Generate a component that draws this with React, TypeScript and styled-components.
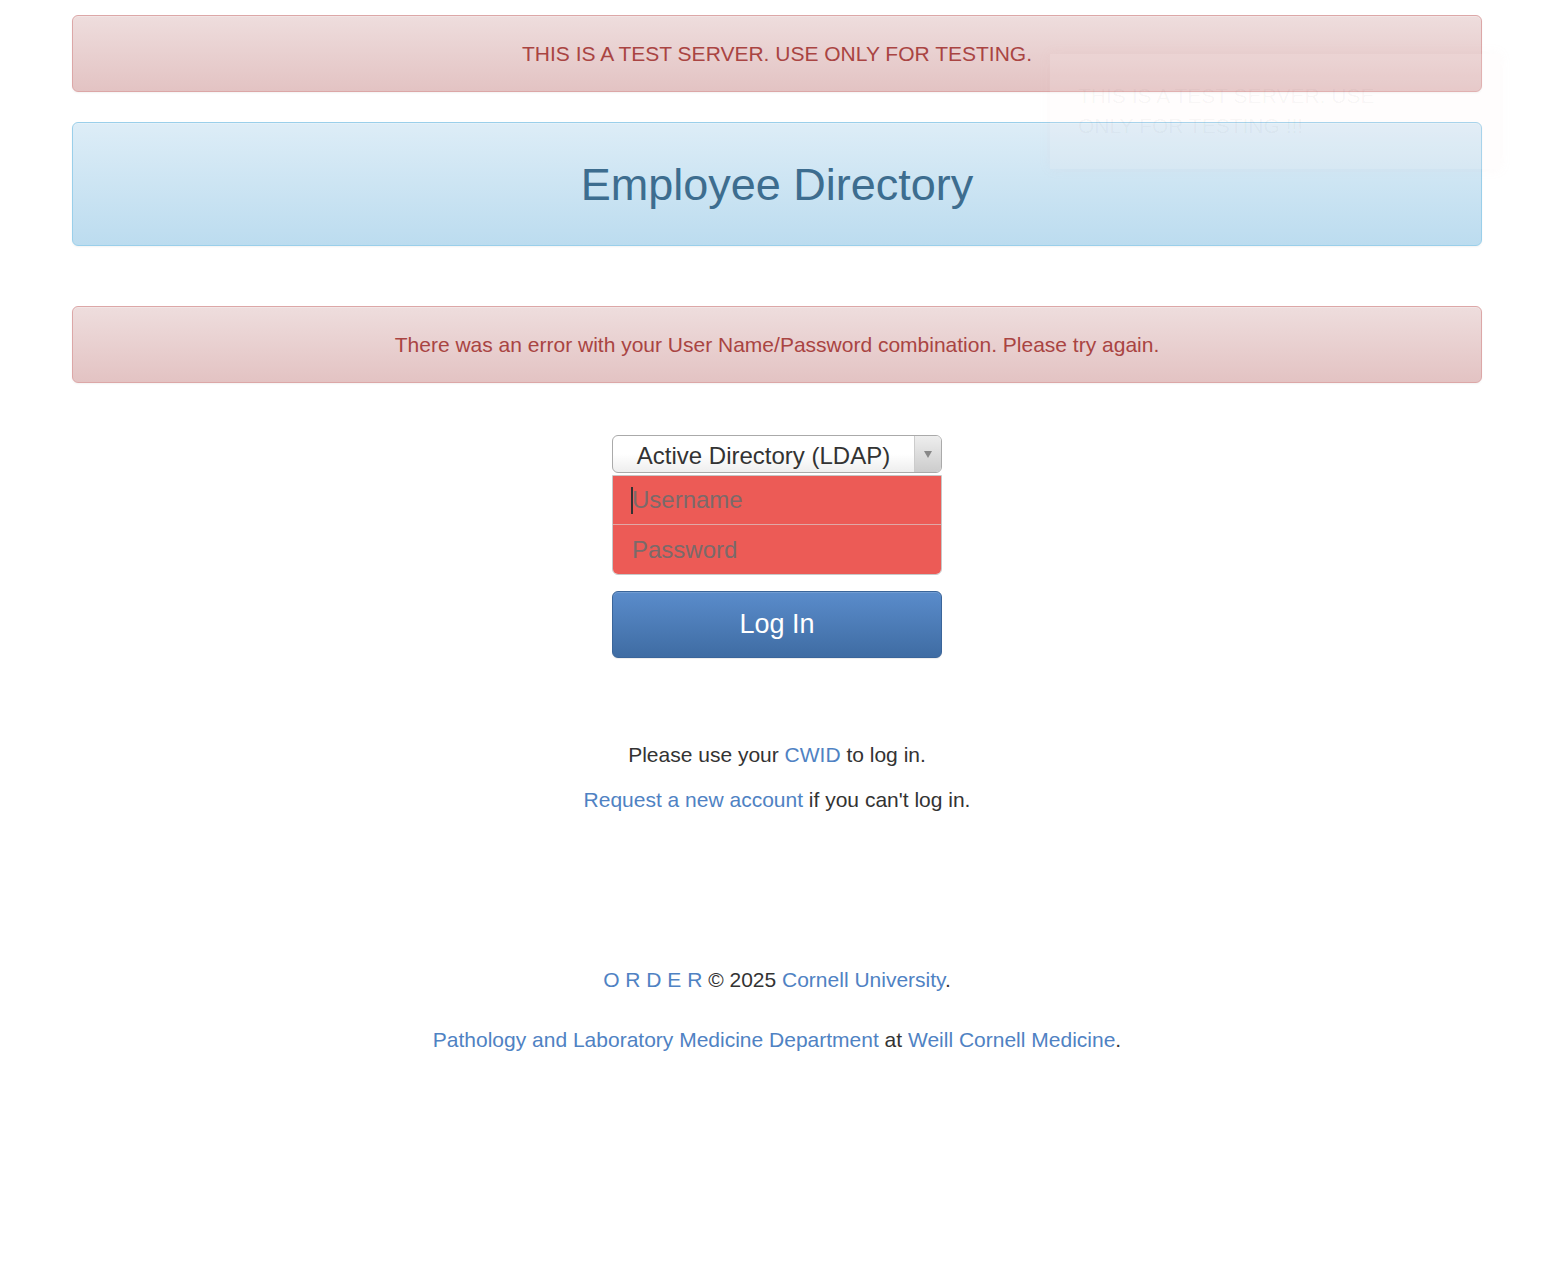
import React from "react";
import styled, { createGlobalStyle } from "styled-components";

const Global = createGlobalStyle`
  html, body { margin: 0; padding: 0; background: #fff; }
  body {
    font-family: "Liberation Sans", Arial, Helvetica, sans-serif;
    font-size: 21px;
    line-height: 30px;
    color: #333;
  }
  * { box-sizing: border-box; }
`;

const Page = styled.div`
  position: relative;
  padding: 15px 72px 200px;
`;

const Alert = styled.div<{ $tone: "danger" | "info"; $mt?: number }>`
  margin-top: ${(p) => p.$mt ?? 0}px;
  margin-bottom: 30px;
  border: 1.5px solid ${(p) => (p.$tone === "danger" ? "#dca7a7" : "#9acfea")};
  border-radius: 6px;
  background-image: ${(p) =>
    p.$tone === "danger"
      ? "linear-gradient(to bottom, #eedddd 0%, #e3c3c3 100%)"
      : "linear-gradient(to bottom, #ddedf7 0%, #bcdcef 100%)"};
  color: ${(p) => (p.$tone === "danger" ? "#a94442" : "#3b6d8f")};
  box-shadow: inset 0 1px 0 rgba(255, 255, 255, 0.25), 0 1px 2px rgba(0, 0, 0, 0.05);
  text-align: center;
  padding: 22.5px;
`;

const HeaderBox = styled(Alert)`
  padding: 0;
  height: 124px;
  display: flex;
  align-items: center;
  justify-content: center;
`;

const Title = styled.h2`
  margin: 0;
  font-size: 45px;
  line-height: 49px;
  font-weight: 400;
  color: #3d6d8f;
`;

const Form = styled.div`
  width: 330px;
  margin: 52px auto 0;
  display: flex;
  flex-direction: column;
`;

const Select = styled.div`
  height: 38px;
  border: 1px solid #aaa;
  border-radius: 6px;
  background-image: linear-gradient(to bottom, #ffffff 0%, #ffffff 50%, #eeeeee 100%);
  display: flex;
  align-items: stretch;
  font-size: 24px;
  color: #333;
  overflow: hidden;
`;

const SelectLabel = styled.div`
  flex: 1;
  display: flex;
  align-items: center;
  justify-content: center;
  padding-top: 3px;
  line-height: 33px;
`;

const SelectArrow = styled.div`
  width: 27px;
  border-left: 1px solid #ccc;
  background-image: linear-gradient(to bottom, #eeeeee 0%, #cccccc 100%);
  display: flex;
  align-items: center;
  justify-content: center;
  &::after {
    content: "";
    border-left: 4px solid transparent;
    border-right: 4px solid transparent;
    border-top: 7px solid #888;
  }
`;

const InputGroup = styled.div`
  margin-top: 2px;
  border: 1px solid #c8c8c8;
  border-radius: 0 0 6px 6px;
  overflow: hidden;
  display: flex;
  flex-direction: column;
`;

const FieldWrap = styled.div`
  position: relative;
`;

const Field = styled.input<{ $last?: boolean }>`
  display: block;
  width: 100%;
  height: 49px;
  border: none;
  border-bottom: ${(p) => (p.$last ? "none" : "1px solid #e0a8a6")};
  background: #ec5b56;
  padding: 0 19px;
  font-family: "Liberation Sans", Arial, sans-serif;
  font-size: 24px;
  color: #333;
  outline: none;
  &::placeholder { color: #7a6a6a; opacity: 1; }
`;

const Caret = styled.span`
  position: absolute;
  left: 18px;
  top: 11px;
  width: 2px;
  height: 27px;
  background: #333;
`;

const Button = styled.button`
  margin-top: 16px;
  height: 67px;
  border: 1px solid #3a659a;
  border-radius: 6px;
  background-image: linear-gradient(to bottom, #5a8ccb 0%, #3f6ca3 100%);
  box-shadow: inset 0 1px 0 rgba(255, 255, 255, 0.15), 0 1px 1px rgba(0, 0, 0, 0.075);
  color: #fff;
  font-family: "Liberation Sans", Arial, sans-serif;
  font-size: 27px;
  cursor: pointer;
`;

const Info = styled.div`
  margin-top: 82px;
  text-align: center;
`;

const Para = styled.p`
  margin: 0 0 15px;
`;

const Link = styled.a`
  color: #4f82c3;
  text-decoration: none;
`;

const Footer = styled.div`
  margin-top: 150px;
  text-align: center;
`;

const FooterLine = styled.p`
  margin: 0 0 30px;
`;

const Toast = styled.div`
  position: absolute;
  top: 54px;
  left: 1050px;
  width: 450px;
  height: 115px;
  padding: 27px 28px;
  background: rgba(255, 244, 244, 0.14);
  box-shadow: 0 0 12px rgba(230, 180, 180, 0.08);
  color: rgba(60, 60, 60, 0.045);
  font-size: 21px;
  line-height: 30px;
  pointer-events: none;
`;

export default function App() {
  return (
    <>
      <Global />
      <Page>
        <Alert $tone="danger">THIS IS A TEST SERVER. USE ONLY FOR TESTING.</Alert>
        <HeaderBox $tone="info">
          <Title>Employee Directory</Title>
        </HeaderBox>
        <Alert $tone="danger" $mt={60}>
          There was an error with your User Name/Password combination. Please try again.
        </Alert>
        <Form>
          <Select>
            <SelectLabel>Active Directory (LDAP)</SelectLabel>
            <SelectArrow />
          </Select>
          <InputGroup>
            <FieldWrap>
              <Field placeholder="Username" />
              <Caret />
            </FieldWrap>
            <Field type="password" placeholder="Password" $last />
          </InputGroup>
          <Button>Log In</Button>
        </Form>
        <Info>
          <Para>
            Please use your <Link href="#">CWID</Link> to log in.
          </Para>
          <Para>
            <Link href="#">Request a new account</Link> if you can't log in.
          </Para>
        </Info>
        <Footer>
          <FooterLine>
            <Link href="#">O R D E R</Link> © 2025 <Link href="#">Cornell University</Link>.
          </FooterLine>
          <FooterLine>
            <Link href="#">Pathology and Laboratory Medicine Department</Link> at{" "}
            <Link href="#">Weill Cornell Medicine</Link>.
          </FooterLine>
        </Footer>
        <Toast>
          THIS IS A TEST SERVER. USE
          <br />
          ONLY FOR TESTING !!!
        </Toast>
      </Page>
    </>
  );
}
